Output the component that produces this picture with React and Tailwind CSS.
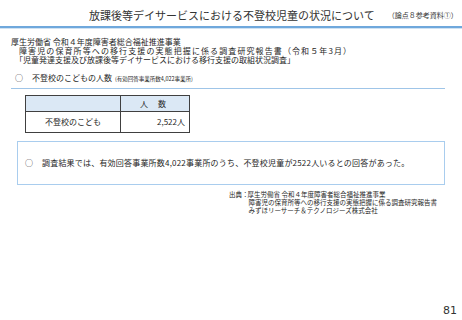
export default function App() {
  const jp = { fontFamily: '"Noto Sans CJK JP", "Noto Sans", sans-serif' }

  return (
    <div className="w-[462px] h-[320px] bg-white text-[#262626] flex flex-col overflow-hidden" style={jp}>
      {/* slide header */}
      <div className="h-[26px] flex items-center pl-[89px] pt-[4px]">
        <h1 className="text-[11px] leading-[12px] font-normal text-[#333]">放課後等デイサービスにおける不登校児童の状況について</h1>
        <span className="ml-[13px] text-[7px] leading-[8px] text-[#333]">（論点８参考資料①）</span>
      </div>
      <div className="h-[2px] bg-[#6fa8dc]" />
      <div className="h-[1px] bg-[#cfe2f3]" />

      {/* survey reference */}
      <div className="pt-[8px] pl-[11px] text-[8px] leading-[9px]">
        <p>厚生労働省 令和４年度障害者総合福祉推進事業</p>
        <p className="pl-[8px] tracking-[1.1px]">障害児の保育所等への移行支援の実態把握に係る調査研究報告書（令和５年3月）</p>
        <p className="pl-[4px]">「児童発達支援及び放課後等デイサービスにおける移行支援の取組状況調査」</p>
      </div>

      <div className="mt-[9px] ml-[11px] mr-[17px] border-b border-[#9fc5e8] pb-[4px] flex items-baseline text-[8px] leading-[10px]">
        <span className="ml-[4px] w-[17px]">○</span>
        <span>不登校のこどもの人数</span>
        <span className="ml-[3px] text-[5.5px]">(有効回答事業所数4,022事業所)</span>
      </div>

      {/* count table */}
      <table className="mt-[6px] ml-[25px] w-[165px] border-collapse text-[8px] leading-[10px]">
        <tbody>
          <tr className="h-[16px] bg-[#dbe8f5]">
            <td className="w-[95px] border border-[#404040]" />
            <td className="border border-[#404040] text-center tracking-[4px]">人 数</td>
          </tr>
          <tr className="h-[21px]">
            <td className="border border-[#404040] text-center">不登校のこども</td>
            <td className="border border-[#404040] text-right pr-[4px]">2,522人</td>
          </tr>
        </tbody>
      </table>

      {/* summary box */}
      <div className="mt-[8px] ml-[17px] w-[428px] h-[44px] border border-[#a9cdee] flex items-center text-[8px] leading-[10px] tracking-[0.2px]">
        <span className="ml-[7px] w-[17px]">○</span>
        <span>調査結果では、有効回答事業所数4,022事業所のうち、不登校児童が2522人いるとの回答があった。</span>
      </div>

      {/* source note */}
      <div className="mt-[5px] ml-[229px] text-[6.5px] leading-[8px] flex">
        <span>出典：</span>
        <div>
          <p className="-ml-[1px]">厚生労働省 令和４年度障害者総合福祉推進事業</p>
          <p>障害児の保育所等への移行支援の実態把握に係る調査研究報告書</p>
          <p>みずほリーサーチ＆テクノロジーズ株式会社</p>
        </div>
      </div>

      <div className="mt-auto pb-[3px] pr-[5px] text-right text-[11px] leading-[12px] text-[#333]" style={{ fontFamily: '"DejaVu Sans", sans-serif' }}>
        81
      </div>
    </div>
  )
}
